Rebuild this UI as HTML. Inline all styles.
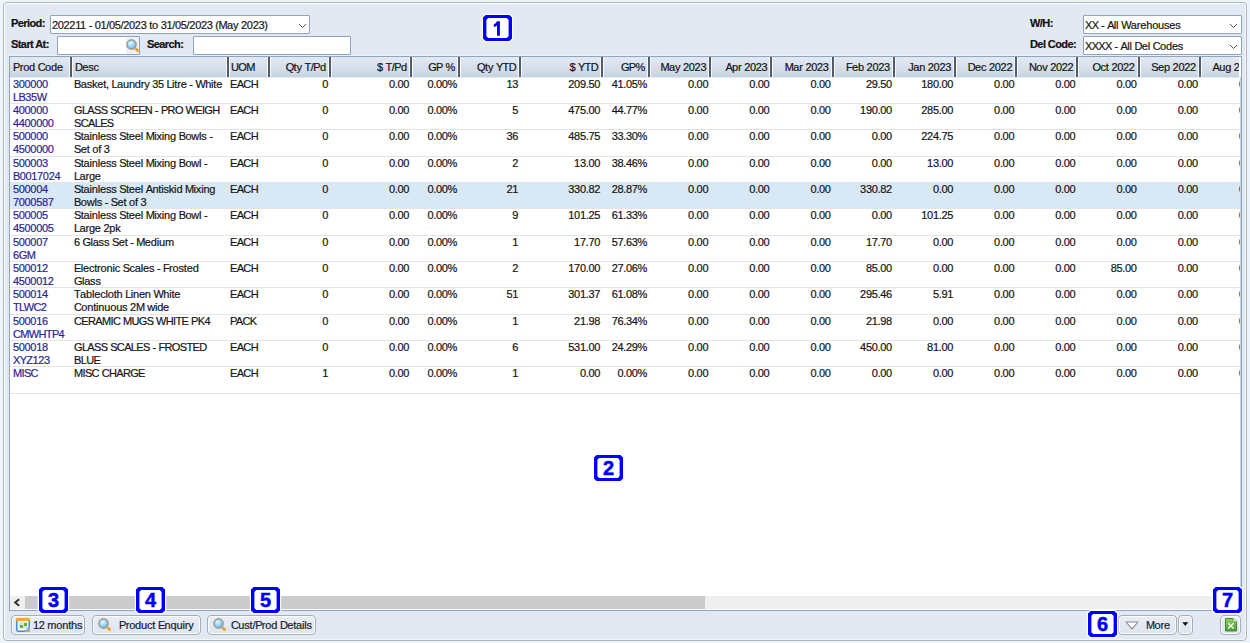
<!DOCTYPE html><html><head><meta charset="utf-8"><style>

*{box-sizing:border-box}
html,body{margin:0;padding:0;width:1250px;height:643px;overflow:hidden;background:#eef4fb;font-family:"Liberation Sans", sans-serif;font-size:11px;letter-spacing:-0.33px;color:#1a1a1a}
.u{letter-spacing:-0.65px} .l{letter-spacing:-0.18px} .lbl .u,.lbl .l{letter-spacing:inherit}
.a{position:absolute;white-space:nowrap;-webkit-text-stroke:0.2px currentColor}
.panel{position:absolute;left:3px;top:2px;width:1244px;height:639px;border:1px solid #b4b5b5;border-radius:4px;background:#e3e9f2;box-shadow:inset 1px 1px 0 #fff,inset -1px -1px 0 #f3f6fa}
.lbl{font-weight:bold;color:#111;letter-spacing:-0.58px}
.inp{position:absolute;background:#fff;border:1px solid #8ea3bd;border-radius:1px}
.hdr{position:absolute;top:57px;height:20px;background:linear-gradient(#e3e9f3,#dae3ee 35%,#cfdae7 80%,#c3d1e1)}
.dv{position:absolute;top:57px;height:20px;width:2px;background:#535c68;box-shadow:-1px 0 0 #f7f9fc,1px 0 0 #f7f9fc}
.ht{position:absolute;top:61px;line-height:13px;color:#141414;-webkit-text-stroke:0.2px currentColor}
.c{position:absolute;line-height:13px;color:#141414;-webkit-text-stroke:0.2px currentColor}
.pc{color:#2a2497}
.rl{position:absolute;height:1px;background:#e4e4e4}
.badge{position:absolute;width:29px;height:26px;background:#fff;border:3px solid #0000ff;border-radius:3px;color:#0000ff;font-weight:bold;font-size:22px;letter-spacing:0;text-align:center;line-height:19px;box-shadow:0 0 0 1px #fff}
.btn{position:absolute;top:615px;height:20px;border:1px solid #a9aeb4;border-radius:4px;background:linear-gradient(#e9eef5,#dde5ef);box-shadow:inset 0 0 0 1px #fafcfe}

</style></head><body>
<div class="panel"></div>
<div class="a lbl" style="left:11px;top:17px;line-height:13px">Period:</div>
<div class="inp" style="left:50px;top:15px;width:260px;height:19px"></div>
<div class="a" style="left:52px;top:19px;line-height:13px;color:#151515">202211 - 01/05/2023 <span class="l">to</span> 31/05/2023 (<span class="u">M</span><span class="l">ay</span> 2023)</div>
<svg class="a" style="left:298px;top:23px" width="9" height="6"><path d="M1 1 L4.5 4.5 L8 1" fill="none" stroke="#5a5a5a" stroke-width="1"/></svg>
<div class="a lbl" style="left:11px;top:38px;line-height:13px">Start At:</div>
<div class="inp" style="left:57px;top:36px;width:83px;height:19px"></div>
<div class="a" style="left:126px;top:37px;width:13px;height:17px;background:#eef0f4"></div>
<svg class="a" style="left:125px;top:38px" width="16" height="16" viewBox="0 0 16 16"><defs><radialGradient id="lg0" cx="0.4" cy="0.35" r="0.75"><stop offset="0" stop-color="#e4f6ff"/><stop offset="0.55" stop-color="#92d2f5"/><stop offset="1" stop-color="#4fa8e3"/></radialGradient></defs><circle cx="6.5" cy="6.5" r="4.6" fill="url(#lg0)" stroke="#a29d99" stroke-width="1.6"/><path d="M11.2 11.2 L12.6 12.6" stroke="#e9a11f" stroke-width="2.8" stroke-linecap="round"/></svg>
<div class="a lbl" style="left:147px;top:38px;line-height:13px">Search:</div>
<div class="inp" style="left:193px;top:36px;width:158px;height:19px"></div>
<div class="a lbl" style="left:1030px;top:17px;line-height:13px">W/H:</div>
<div class="a lbl" style="left:1030px;top:38px;line-height:13px">Del Code:</div>
<div class="inp" style="left:1083px;top:15px;width:159px;height:19px"></div>
<div class="a" style="left:1085px;top:19px;line-height:13px;color:#151515"><span class="u">XX</span> - <span class="u">A</span><span class="l">ll</span> <span class="u">W</span><span class="l">arehouses</span></div>
<svg class="a" style="left:1229px;top:23px" width="9" height="6"><path d="M1 1 L4.5 4.5 L8 1" fill="none" stroke="#5a5a5a" stroke-width="1"/></svg>
<div class="inp" style="left:1083px;top:36px;width:159px;height:19px"></div>
<div class="a" style="left:1085px;top:40px;line-height:13px;color:#151515"><span class="u">XXXX</span> - <span class="u">A</span><span class="l">ll</span> <span class="u">D</span><span class="l">el</span> <span class="u">C</span><span class="l">odes</span></div>
<svg class="a" style="left:1229px;top:44px" width="9" height="6"><path d="M1 1 L4.5 4.5 L8 1" fill="none" stroke="#5a5a5a" stroke-width="1"/></svg>
<div class="a" style="left:10px;top:55px;width:1231px;height:1px;background:#ebf0f8"></div>
<div class="a" style="left:9px;top:56px;width:1233px;height:555px;border:1px solid #8fa4bd;background:#fff;overflow:hidden">
<div class="hdr" style="left:0;top:0;width:1300px"></div>
<div class="a" style="left:0;top:20px;width:1300px;height:1px;background:#e6ecf4"></div>
<div class="ht" style="left:3px;top:4px"><span class="u">P</span><span class="l">rod</span> <span class="u">C</span><span class="l">ode</span></div>
<div class="ht" style="left:65px;top:4px"><span class="u">D</span><span class="l">esc</span></div>
<div class="ht" style="left:221px;top:4px"><span class="u">UOM</span></div>
<div class="ht" style="left:260px;top:4px;width:56px;text-align:right"><span class="u">Q</span><span class="l">ty</span> <span class="u">T</span>/<span class="u">P</span><span class="l">d</span></div>
<div class="ht" style="left:321px;top:4px;width:76px;text-align:right">$ <span class="u">T</span>/<span class="u">P</span><span class="l">d</span></div>
<div class="ht" style="left:402px;top:4px;width:43px;text-align:right"><span class="u">GP</span> %</div>
<div class="ht" style="left:450px;top:4px;width:56px;text-align:right"><span class="u">Q</span><span class="l">ty</span> <span class="u">YTD</span></div>
<div class="ht" style="left:511px;top:4px;width:77px;text-align:right">$ <span class="u">YTD</span></div>
<div class="ht" style="left:593px;top:4px;width:42px;text-align:right"><span class="u">GP</span>%</div>
<div class="ht" style="left:640px;top:4px;width:56.200000000000045px;text-align:right"><span class="u">M</span><span class="l">ay</span> 2023</div>
<div class="ht" style="left:701.2px;top:4px;width:56.19999999999993px;text-align:right"><span class="u">A</span><span class="l">pr</span> 2023</div>
<div class="ht" style="left:762.4px;top:4px;width:56.200000000000045px;text-align:right"><span class="u">M</span><span class="l">ar</span> 2023</div>
<div class="ht" style="left:823.6px;top:4px;width:56.19999999999993px;text-align:right"><span class="u">F</span><span class="l">eb</span> 2023</div>
<div class="ht" style="left:884.8px;top:4px;width:56.200000000000045px;text-align:right"><span class="u">J</span><span class="l">an</span> 2023</div>
<div class="ht" style="left:946.0px;top:4px;width:56.200000000000045px;text-align:right"><span class="u">D</span><span class="l">ec</span> 2022</div>
<div class="ht" style="left:1007.2px;top:4px;width:56.200000000000045px;text-align:right"><span class="u">N</span><span class="l">ov</span> 2022</div>
<div class="ht" style="left:1068.4px;top:4px;width:56.19999999999982px;text-align:right"><span class="u">O</span><span class="l">ct</span> 2022</div>
<div class="ht" style="left:1129.6px;top:4px;width:56.200000000000045px;text-align:right"><span class="u">S</span><span class="l">ep</span> 2022</div>
<div class="ht" style="left:1190.8px;top:4px;width:56.200000000000045px;text-align:right"><span class="u">A</span><span class="l">ug</span> 2022</div>
<div class="dv" style="left:60px;top:0"></div>
<div class="dv" style="left:217px;top:0"></div>
<div class="dv" style="left:258px;top:0"></div>
<div class="dv" style="left:319px;top:0"></div>
<div class="dv" style="left:400px;top:0"></div>
<div class="dv" style="left:448px;top:0"></div>
<div class="dv" style="left:509px;top:0"></div>
<div class="dv" style="left:591px;top:0"></div>
<div class="dv" style="left:638px;top:0"></div>
<div class="dv" style="left:699.2px;top:0"></div>
<div class="dv" style="left:760.4px;top:0"></div>
<div class="dv" style="left:821.6px;top:0"></div>
<div class="dv" style="left:882.8px;top:0"></div>
<div class="dv" style="left:944.0px;top:0"></div>
<div class="dv" style="left:1005.2px;top:0"></div>
<div class="dv" style="left:1066.4px;top:0"></div>
<div class="dv" style="left:1127.6px;top:0"></div>
<div class="dv" style="left:1188.8px;top:0"></div>
<div class="dv" style="left:1250.0px;top:0"></div>
<div class="rl" style="left:0;top:46px;width:1300px"></div>
<div class="c pc" style="left:3px;top:21.00px">300000<br><span class="u">LB</span>35<span class="u">W</span></div>
<div class="c" style="left:64px;top:21.00px"><span class="u">B</span><span class="l">asket</span>, <span class="u">L</span><span class="l">aundry</span> 35 <span class="u">L</span><span class="l">itre</span> - <span class="u">W</span><span class="l">hite</span><br></div>
<div class="c" style="left:220px;top:21.00px"><span class="u">EACH</span></div>
<div class="c" style="left:260px;top:21.00px;width:58px;text-align:right">0</div>
<div class="c" style="left:321px;top:21.00px;width:78px;text-align:right">0.00</div>
<div class="c" style="left:402px;top:21.00px;width:45px;text-align:right">0.00%</div>
<div class="c" style="left:450px;top:21.00px;width:58px;text-align:right">13</div>
<div class="c" style="left:511px;top:21.00px;width:79px;text-align:right">209.50</div>
<div class="c" style="left:593px;top:21.00px;width:44px;text-align:right">41.05%</div>
<div class="c" style="left:640px;top:21.00px;width:58.200000000000045px;text-align:right">0.00</div>
<div class="c" style="left:701.2px;top:21.00px;width:58.19999999999993px;text-align:right">0.00</div>
<div class="c" style="left:762.4px;top:21.00px;width:58.200000000000045px;text-align:right">0.00</div>
<div class="c" style="left:823.6px;top:21.00px;width:58.19999999999993px;text-align:right">29.50</div>
<div class="c" style="left:884.8px;top:21.00px;width:58.200000000000045px;text-align:right">180.00</div>
<div class="c" style="left:946.0px;top:21.00px;width:58.200000000000045px;text-align:right">0.00</div>
<div class="c" style="left:1007.2px;top:21.00px;width:58.200000000000045px;text-align:right">0.00</div>
<div class="c" style="left:1068.4px;top:21.00px;width:58.19999999999982px;text-align:right">0.00</div>
<div class="c" style="left:1129.6px;top:21.00px;width:58.200000000000045px;text-align:right">0.00</div>
<div class="c" style="left:1190.8px;top:21.00px;width:58.200000000000045px;text-align:right">0.00</div>
<div class="rl" style="left:0;top:72px;width:1300px"></div>
<div class="c pc" style="left:3px;top:47.00px">400000<br>4400000</div>
<div class="c" style="left:64px;top:47.00px"><span class="u">GLASS</span> <span class="u">SCREEN</span> - <span class="u">PRO</span> <span class="u">WEIGH</span><br><span class="u">SCALES</span></div>
<div class="c" style="left:220px;top:47.00px"><span class="u">EACH</span></div>
<div class="c" style="left:260px;top:47.00px;width:58px;text-align:right">0</div>
<div class="c" style="left:321px;top:47.00px;width:78px;text-align:right">0.00</div>
<div class="c" style="left:402px;top:47.00px;width:45px;text-align:right">0.00%</div>
<div class="c" style="left:450px;top:47.00px;width:58px;text-align:right">5</div>
<div class="c" style="left:511px;top:47.00px;width:79px;text-align:right">475.00</div>
<div class="c" style="left:593px;top:47.00px;width:44px;text-align:right">44.77%</div>
<div class="c" style="left:640px;top:47.00px;width:58.200000000000045px;text-align:right">0.00</div>
<div class="c" style="left:701.2px;top:47.00px;width:58.19999999999993px;text-align:right">0.00</div>
<div class="c" style="left:762.4px;top:47.00px;width:58.200000000000045px;text-align:right">0.00</div>
<div class="c" style="left:823.6px;top:47.00px;width:58.19999999999993px;text-align:right">190.00</div>
<div class="c" style="left:884.8px;top:47.00px;width:58.200000000000045px;text-align:right">285.00</div>
<div class="c" style="left:946.0px;top:47.00px;width:58.200000000000045px;text-align:right">0.00</div>
<div class="c" style="left:1007.2px;top:47.00px;width:58.200000000000045px;text-align:right">0.00</div>
<div class="c" style="left:1068.4px;top:47.00px;width:58.19999999999982px;text-align:right">0.00</div>
<div class="c" style="left:1129.6px;top:47.00px;width:58.200000000000045px;text-align:right">0.00</div>
<div class="c" style="left:1190.8px;top:47.00px;width:58.200000000000045px;text-align:right">0.00</div>
<div class="rl" style="left:0;top:99px;width:1300px"></div>
<div class="c pc" style="left:3px;top:73.00px">500000<br>4500000</div>
<div class="c" style="left:64px;top:73.00px"><span class="u">S</span><span class="l">tainless</span> <span class="u">S</span><span class="l">teel</span> <span class="u">M</span><span class="l">ixing</span> <span class="u">B</span><span class="l">owls</span> -<br><span class="u">S</span><span class="l">et</span> <span class="l">of</span> 3</div>
<div class="c" style="left:220px;top:73.00px"><span class="u">EACH</span></div>
<div class="c" style="left:260px;top:73.00px;width:58px;text-align:right">0</div>
<div class="c" style="left:321px;top:73.00px;width:78px;text-align:right">0.00</div>
<div class="c" style="left:402px;top:73.00px;width:45px;text-align:right">0.00%</div>
<div class="c" style="left:450px;top:73.00px;width:58px;text-align:right">36</div>
<div class="c" style="left:511px;top:73.00px;width:79px;text-align:right">485.75</div>
<div class="c" style="left:593px;top:73.00px;width:44px;text-align:right">33.30%</div>
<div class="c" style="left:640px;top:73.00px;width:58.200000000000045px;text-align:right">0.00</div>
<div class="c" style="left:701.2px;top:73.00px;width:58.19999999999993px;text-align:right">0.00</div>
<div class="c" style="left:762.4px;top:73.00px;width:58.200000000000045px;text-align:right">0.00</div>
<div class="c" style="left:823.6px;top:73.00px;width:58.19999999999993px;text-align:right">0.00</div>
<div class="c" style="left:884.8px;top:73.00px;width:58.200000000000045px;text-align:right">224.75</div>
<div class="c" style="left:946.0px;top:73.00px;width:58.200000000000045px;text-align:right">0.00</div>
<div class="c" style="left:1007.2px;top:73.00px;width:58.200000000000045px;text-align:right">0.00</div>
<div class="c" style="left:1068.4px;top:73.00px;width:58.19999999999982px;text-align:right">0.00</div>
<div class="c" style="left:1129.6px;top:73.00px;width:58.200000000000045px;text-align:right">0.00</div>
<div class="c" style="left:1190.8px;top:73.00px;width:58.200000000000045px;text-align:right">0.00</div>
<div class="rl" style="left:0;top:125px;width:1300px"></div>
<div class="c pc" style="left:3px;top:100.00px">500003<br><span class="u">B</span>0017024</div>
<div class="c" style="left:64px;top:100.00px"><span class="u">S</span><span class="l">tainless</span> <span class="u">S</span><span class="l">teel</span> <span class="u">M</span><span class="l">ixing</span> <span class="u">B</span><span class="l">owl</span> -<br><span class="u">L</span><span class="l">arge</span></div>
<div class="c" style="left:220px;top:100.00px"><span class="u">EACH</span></div>
<div class="c" style="left:260px;top:100.00px;width:58px;text-align:right">0</div>
<div class="c" style="left:321px;top:100.00px;width:78px;text-align:right">0.00</div>
<div class="c" style="left:402px;top:100.00px;width:45px;text-align:right">0.00%</div>
<div class="c" style="left:450px;top:100.00px;width:58px;text-align:right">2</div>
<div class="c" style="left:511px;top:100.00px;width:79px;text-align:right">13.00</div>
<div class="c" style="left:593px;top:100.00px;width:44px;text-align:right">38.46%</div>
<div class="c" style="left:640px;top:100.00px;width:58.200000000000045px;text-align:right">0.00</div>
<div class="c" style="left:701.2px;top:100.00px;width:58.19999999999993px;text-align:right">0.00</div>
<div class="c" style="left:762.4px;top:100.00px;width:58.200000000000045px;text-align:right">0.00</div>
<div class="c" style="left:823.6px;top:100.00px;width:58.19999999999993px;text-align:right">0.00</div>
<div class="c" style="left:884.8px;top:100.00px;width:58.200000000000045px;text-align:right">13.00</div>
<div class="c" style="left:946.0px;top:100.00px;width:58.200000000000045px;text-align:right">0.00</div>
<div class="c" style="left:1007.2px;top:100.00px;width:58.200000000000045px;text-align:right">0.00</div>
<div class="c" style="left:1068.4px;top:100.00px;width:58.19999999999982px;text-align:right">0.00</div>
<div class="c" style="left:1129.6px;top:100.00px;width:58.200000000000045px;text-align:right">0.00</div>
<div class="c" style="left:1190.8px;top:100.00px;width:58.200000000000045px;text-align:right">0.00</div>
<div class="a" style="left:0;top:126px;width:1300px;height:25px;background:#d9e8f5"></div>
<div class="rl" style="left:0;top:151px;width:1300px"></div>
<div class="c pc" style="left:3px;top:126.00px">500004<br>7000587</div>
<div class="c" style="left:64px;top:126.00px"><span class="u">S</span><span class="l">tainless</span> <span class="u">S</span><span class="l">teel</span> <span class="u">A</span><span class="l">ntiskid</span> <span class="u">M</span><span class="l">ixing</span><br><span class="u">B</span><span class="l">owls</span> - <span class="u">S</span><span class="l">et</span> <span class="l">of</span> 3</div>
<div class="c" style="left:220px;top:126.00px"><span class="u">EACH</span></div>
<div class="c" style="left:260px;top:126.00px;width:58px;text-align:right">0</div>
<div class="c" style="left:321px;top:126.00px;width:78px;text-align:right">0.00</div>
<div class="c" style="left:402px;top:126.00px;width:45px;text-align:right">0.00%</div>
<div class="c" style="left:450px;top:126.00px;width:58px;text-align:right">21</div>
<div class="c" style="left:511px;top:126.00px;width:79px;text-align:right">330.82</div>
<div class="c" style="left:593px;top:126.00px;width:44px;text-align:right">28.87%</div>
<div class="c" style="left:640px;top:126.00px;width:58.200000000000045px;text-align:right">0.00</div>
<div class="c" style="left:701.2px;top:126.00px;width:58.19999999999993px;text-align:right">0.00</div>
<div class="c" style="left:762.4px;top:126.00px;width:58.200000000000045px;text-align:right">0.00</div>
<div class="c" style="left:823.6px;top:126.00px;width:58.19999999999993px;text-align:right">330.82</div>
<div class="c" style="left:884.8px;top:126.00px;width:58.200000000000045px;text-align:right">0.00</div>
<div class="c" style="left:946.0px;top:126.00px;width:58.200000000000045px;text-align:right">0.00</div>
<div class="c" style="left:1007.2px;top:126.00px;width:58.200000000000045px;text-align:right">0.00</div>
<div class="c" style="left:1068.4px;top:126.00px;width:58.19999999999982px;text-align:right">0.00</div>
<div class="c" style="left:1129.6px;top:126.00px;width:58.200000000000045px;text-align:right">0.00</div>
<div class="c" style="left:1190.8px;top:126.00px;width:58.200000000000045px;text-align:right">0.00</div>
<div class="rl" style="left:0;top:178px;width:1300px"></div>
<div class="c pc" style="left:3px;top:152.00px">500005<br>4500005</div>
<div class="c" style="left:64px;top:152.00px"><span class="u">S</span><span class="l">tainless</span> <span class="u">S</span><span class="l">teel</span> <span class="u">M</span><span class="l">ixing</span> <span class="u">B</span><span class="l">owl</span> -<br><span class="u">L</span><span class="l">arge</span> 2<span class="l">pk</span></div>
<div class="c" style="left:220px;top:152.00px"><span class="u">EACH</span></div>
<div class="c" style="left:260px;top:152.00px;width:58px;text-align:right">0</div>
<div class="c" style="left:321px;top:152.00px;width:78px;text-align:right">0.00</div>
<div class="c" style="left:402px;top:152.00px;width:45px;text-align:right">0.00%</div>
<div class="c" style="left:450px;top:152.00px;width:58px;text-align:right">9</div>
<div class="c" style="left:511px;top:152.00px;width:79px;text-align:right">101.25</div>
<div class="c" style="left:593px;top:152.00px;width:44px;text-align:right">61.33%</div>
<div class="c" style="left:640px;top:152.00px;width:58.200000000000045px;text-align:right">0.00</div>
<div class="c" style="left:701.2px;top:152.00px;width:58.19999999999993px;text-align:right">0.00</div>
<div class="c" style="left:762.4px;top:152.00px;width:58.200000000000045px;text-align:right">0.00</div>
<div class="c" style="left:823.6px;top:152.00px;width:58.19999999999993px;text-align:right">0.00</div>
<div class="c" style="left:884.8px;top:152.00px;width:58.200000000000045px;text-align:right">101.25</div>
<div class="c" style="left:946.0px;top:152.00px;width:58.200000000000045px;text-align:right">0.00</div>
<div class="c" style="left:1007.2px;top:152.00px;width:58.200000000000045px;text-align:right">0.00</div>
<div class="c" style="left:1068.4px;top:152.00px;width:58.19999999999982px;text-align:right">0.00</div>
<div class="c" style="left:1129.6px;top:152.00px;width:58.200000000000045px;text-align:right">0.00</div>
<div class="c" style="left:1190.8px;top:152.00px;width:58.200000000000045px;text-align:right">0.00</div>
<div class="rl" style="left:0;top:204px;width:1300px"></div>
<div class="c pc" style="left:3px;top:179.00px">500007<br>6<span class="u">GM</span></div>
<div class="c" style="left:64px;top:179.00px">6 <span class="u">G</span><span class="l">lass</span> <span class="u">S</span><span class="l">et</span> - <span class="u">M</span><span class="l">edium</span><br></div>
<div class="c" style="left:220px;top:179.00px"><span class="u">EACH</span></div>
<div class="c" style="left:260px;top:179.00px;width:58px;text-align:right">0</div>
<div class="c" style="left:321px;top:179.00px;width:78px;text-align:right">0.00</div>
<div class="c" style="left:402px;top:179.00px;width:45px;text-align:right">0.00%</div>
<div class="c" style="left:450px;top:179.00px;width:58px;text-align:right">1</div>
<div class="c" style="left:511px;top:179.00px;width:79px;text-align:right">17.70</div>
<div class="c" style="left:593px;top:179.00px;width:44px;text-align:right">57.63%</div>
<div class="c" style="left:640px;top:179.00px;width:58.200000000000045px;text-align:right">0.00</div>
<div class="c" style="left:701.2px;top:179.00px;width:58.19999999999993px;text-align:right">0.00</div>
<div class="c" style="left:762.4px;top:179.00px;width:58.200000000000045px;text-align:right">0.00</div>
<div class="c" style="left:823.6px;top:179.00px;width:58.19999999999993px;text-align:right">17.70</div>
<div class="c" style="left:884.8px;top:179.00px;width:58.200000000000045px;text-align:right">0.00</div>
<div class="c" style="left:946.0px;top:179.00px;width:58.200000000000045px;text-align:right">0.00</div>
<div class="c" style="left:1007.2px;top:179.00px;width:58.200000000000045px;text-align:right">0.00</div>
<div class="c" style="left:1068.4px;top:179.00px;width:58.19999999999982px;text-align:right">0.00</div>
<div class="c" style="left:1129.6px;top:179.00px;width:58.200000000000045px;text-align:right">0.00</div>
<div class="c" style="left:1190.8px;top:179.00px;width:58.200000000000045px;text-align:right">0.00</div>
<div class="rl" style="left:0;top:230px;width:1300px"></div>
<div class="c pc" style="left:3px;top:205.00px">500012<br>4500012</div>
<div class="c" style="left:64px;top:205.00px"><span class="u">E</span><span class="l">lectronic</span> <span class="u">S</span><span class="l">cales</span> - <span class="u">F</span><span class="l">rosted</span><br><span class="u">G</span><span class="l">lass</span></div>
<div class="c" style="left:220px;top:205.00px"><span class="u">EACH</span></div>
<div class="c" style="left:260px;top:205.00px;width:58px;text-align:right">0</div>
<div class="c" style="left:321px;top:205.00px;width:78px;text-align:right">0.00</div>
<div class="c" style="left:402px;top:205.00px;width:45px;text-align:right">0.00%</div>
<div class="c" style="left:450px;top:205.00px;width:58px;text-align:right">2</div>
<div class="c" style="left:511px;top:205.00px;width:79px;text-align:right">170.00</div>
<div class="c" style="left:593px;top:205.00px;width:44px;text-align:right">27.06%</div>
<div class="c" style="left:640px;top:205.00px;width:58.200000000000045px;text-align:right">0.00</div>
<div class="c" style="left:701.2px;top:205.00px;width:58.19999999999993px;text-align:right">0.00</div>
<div class="c" style="left:762.4px;top:205.00px;width:58.200000000000045px;text-align:right">0.00</div>
<div class="c" style="left:823.6px;top:205.00px;width:58.19999999999993px;text-align:right">85.00</div>
<div class="c" style="left:884.8px;top:205.00px;width:58.200000000000045px;text-align:right">0.00</div>
<div class="c" style="left:946.0px;top:205.00px;width:58.200000000000045px;text-align:right">0.00</div>
<div class="c" style="left:1007.2px;top:205.00px;width:58.200000000000045px;text-align:right">0.00</div>
<div class="c" style="left:1068.4px;top:205.00px;width:58.19999999999982px;text-align:right">85.00</div>
<div class="c" style="left:1129.6px;top:205.00px;width:58.200000000000045px;text-align:right">0.00</div>
<div class="c" style="left:1190.8px;top:205.00px;width:58.200000000000045px;text-align:right">0.00</div>
<div class="rl" style="left:0;top:257px;width:1300px"></div>
<div class="c pc" style="left:3px;top:231.00px">500014<br><span class="u">TLWC</span>2</div>
<div class="c" style="left:64px;top:231.00px"><span class="u">T</span><span class="l">ablecloth</span> <span class="u">L</span><span class="l">inen</span> <span class="u">W</span><span class="l">hite</span><br><span class="u">C</span><span class="l">ontinuous</span> 2<span class="u">M</span> <span class="l">wide</span></div>
<div class="c" style="left:220px;top:231.00px"><span class="u">EACH</span></div>
<div class="c" style="left:260px;top:231.00px;width:58px;text-align:right">0</div>
<div class="c" style="left:321px;top:231.00px;width:78px;text-align:right">0.00</div>
<div class="c" style="left:402px;top:231.00px;width:45px;text-align:right">0.00%</div>
<div class="c" style="left:450px;top:231.00px;width:58px;text-align:right">51</div>
<div class="c" style="left:511px;top:231.00px;width:79px;text-align:right">301.37</div>
<div class="c" style="left:593px;top:231.00px;width:44px;text-align:right">61.08%</div>
<div class="c" style="left:640px;top:231.00px;width:58.200000000000045px;text-align:right">0.00</div>
<div class="c" style="left:701.2px;top:231.00px;width:58.19999999999993px;text-align:right">0.00</div>
<div class="c" style="left:762.4px;top:231.00px;width:58.200000000000045px;text-align:right">0.00</div>
<div class="c" style="left:823.6px;top:231.00px;width:58.19999999999993px;text-align:right">295.46</div>
<div class="c" style="left:884.8px;top:231.00px;width:58.200000000000045px;text-align:right">5.91</div>
<div class="c" style="left:946.0px;top:231.00px;width:58.200000000000045px;text-align:right">0.00</div>
<div class="c" style="left:1007.2px;top:231.00px;width:58.200000000000045px;text-align:right">0.00</div>
<div class="c" style="left:1068.4px;top:231.00px;width:58.19999999999982px;text-align:right">0.00</div>
<div class="c" style="left:1129.6px;top:231.00px;width:58.200000000000045px;text-align:right">0.00</div>
<div class="c" style="left:1190.8px;top:231.00px;width:58.200000000000045px;text-align:right">0.00</div>
<div class="rl" style="left:0;top:283px;width:1300px"></div>
<div class="c pc" style="left:3px;top:258.00px">500016<br><span class="u">CMWHTP</span>4</div>
<div class="c" style="left:64px;top:258.00px"><span class="u">CERAMIC</span> <span class="u">MUGS</span> <span class="u">WHITE</span> <span class="u">PK</span>4<br></div>
<div class="c" style="left:220px;top:258.00px"><span class="u">PACK</span></div>
<div class="c" style="left:260px;top:258.00px;width:58px;text-align:right">0</div>
<div class="c" style="left:321px;top:258.00px;width:78px;text-align:right">0.00</div>
<div class="c" style="left:402px;top:258.00px;width:45px;text-align:right">0.00%</div>
<div class="c" style="left:450px;top:258.00px;width:58px;text-align:right">1</div>
<div class="c" style="left:511px;top:258.00px;width:79px;text-align:right">21.98</div>
<div class="c" style="left:593px;top:258.00px;width:44px;text-align:right">76.34%</div>
<div class="c" style="left:640px;top:258.00px;width:58.200000000000045px;text-align:right">0.00</div>
<div class="c" style="left:701.2px;top:258.00px;width:58.19999999999993px;text-align:right">0.00</div>
<div class="c" style="left:762.4px;top:258.00px;width:58.200000000000045px;text-align:right">0.00</div>
<div class="c" style="left:823.6px;top:258.00px;width:58.19999999999993px;text-align:right">21.98</div>
<div class="c" style="left:884.8px;top:258.00px;width:58.200000000000045px;text-align:right">0.00</div>
<div class="c" style="left:946.0px;top:258.00px;width:58.200000000000045px;text-align:right">0.00</div>
<div class="c" style="left:1007.2px;top:258.00px;width:58.200000000000045px;text-align:right">0.00</div>
<div class="c" style="left:1068.4px;top:258.00px;width:58.19999999999982px;text-align:right">0.00</div>
<div class="c" style="left:1129.6px;top:258.00px;width:58.200000000000045px;text-align:right">0.00</div>
<div class="c" style="left:1190.8px;top:258.00px;width:58.200000000000045px;text-align:right">0.00</div>
<div class="rl" style="left:0;top:309px;width:1300px"></div>
<div class="c pc" style="left:3px;top:284.00px">500018<br><span class="u">XYZ</span>123</div>
<div class="c" style="left:64px;top:284.00px"><span class="u">GLASS</span> <span class="u">SCALES</span> - <span class="u">FROSTED</span><br><span class="u">BLUE</span></div>
<div class="c" style="left:220px;top:284.00px"><span class="u">EACH</span></div>
<div class="c" style="left:260px;top:284.00px;width:58px;text-align:right">0</div>
<div class="c" style="left:321px;top:284.00px;width:78px;text-align:right">0.00</div>
<div class="c" style="left:402px;top:284.00px;width:45px;text-align:right">0.00%</div>
<div class="c" style="left:450px;top:284.00px;width:58px;text-align:right">6</div>
<div class="c" style="left:511px;top:284.00px;width:79px;text-align:right">531.00</div>
<div class="c" style="left:593px;top:284.00px;width:44px;text-align:right">24.29%</div>
<div class="c" style="left:640px;top:284.00px;width:58.200000000000045px;text-align:right">0.00</div>
<div class="c" style="left:701.2px;top:284.00px;width:58.19999999999993px;text-align:right">0.00</div>
<div class="c" style="left:762.4px;top:284.00px;width:58.200000000000045px;text-align:right">0.00</div>
<div class="c" style="left:823.6px;top:284.00px;width:58.19999999999993px;text-align:right">450.00</div>
<div class="c" style="left:884.8px;top:284.00px;width:58.200000000000045px;text-align:right">81.00</div>
<div class="c" style="left:946.0px;top:284.00px;width:58.200000000000045px;text-align:right">0.00</div>
<div class="c" style="left:1007.2px;top:284.00px;width:58.200000000000045px;text-align:right">0.00</div>
<div class="c" style="left:1068.4px;top:284.00px;width:58.19999999999982px;text-align:right">0.00</div>
<div class="c" style="left:1129.6px;top:284.00px;width:58.200000000000045px;text-align:right">0.00</div>
<div class="c" style="left:1190.8px;top:284.00px;width:58.200000000000045px;text-align:right">0.00</div>
<div class="rl" style="left:0;top:336px;width:1300px"></div>
<div class="c pc" style="left:3px;top:310.00px"><span class="u">MISC</span><br></div>
<div class="c" style="left:64px;top:310.00px"><span class="u">MISC</span> <span class="u">CHARGE</span><br></div>
<div class="c" style="left:220px;top:310.00px"><span class="u">EACH</span></div>
<div class="c" style="left:260px;top:310.00px;width:58px;text-align:right">1</div>
<div class="c" style="left:321px;top:310.00px;width:78px;text-align:right">0.00</div>
<div class="c" style="left:402px;top:310.00px;width:45px;text-align:right">0.00%</div>
<div class="c" style="left:450px;top:310.00px;width:58px;text-align:right">1</div>
<div class="c" style="left:511px;top:310.00px;width:79px;text-align:right">0.00</div>
<div class="c" style="left:593px;top:310.00px;width:44px;text-align:right">0.00%</div>
<div class="c" style="left:640px;top:310.00px;width:58.200000000000045px;text-align:right">0.00</div>
<div class="c" style="left:701.2px;top:310.00px;width:58.19999999999993px;text-align:right">0.00</div>
<div class="c" style="left:762.4px;top:310.00px;width:58.200000000000045px;text-align:right">0.00</div>
<div class="c" style="left:823.6px;top:310.00px;width:58.19999999999993px;text-align:right">0.00</div>
<div class="c" style="left:884.8px;top:310.00px;width:58.200000000000045px;text-align:right">0.00</div>
<div class="c" style="left:946.0px;top:310.00px;width:58.200000000000045px;text-align:right">0.00</div>
<div class="c" style="left:1007.2px;top:310.00px;width:58.200000000000045px;text-align:right">0.00</div>
<div class="c" style="left:1068.4px;top:310.00px;width:58.19999999999982px;text-align:right">0.00</div>
<div class="c" style="left:1129.6px;top:310.00px;width:58.200000000000045px;text-align:right">0.00</div>
<div class="c" style="left:1190.8px;top:310.00px;width:58.200000000000045px;text-align:right">0.00</div>
<div class="a" style="left:1229px;top:0;width:4px;height:20px;background:#fff"></div>
<div class="rl" style="left:0;top:361.42px;width:0"></div>
<div class="a" style="left:0;top:539px;width:1300px;height:13px;background:#efefef"></div>
<div class="a" style="left:15px;top:539px;width:680px;height:13px;background:#cbcbcb"></div>
<svg class="a" style="left:3px;top:541px" width="8" height="9"><path d="M6.2 1.2 L2.2 4.5 L6.2 7.8" fill="none" stroke="#333" stroke-width="2"/></svg>
<div class="a" style="left:1230px;top:20px;width:1px;height:533px;background:#c3d2e2"></div>
</div>
<div class="btn" style="left:11px;width:74px"></div>
<svg class="a" style="left:16px;top:618px" width="14" height="14" viewBox="0 0 14 14"><rect x="0.75" y="0.75" width="12.5" height="12.5" rx="1.5" fill="#fff" stroke="#3b8fd0" stroke-width="1.5"/><rect x="0" y="0" width="14" height="3" rx="1.2" fill="#f5a53a"/><rect x="2.5" y="4" width="9" height="6.5" fill="#e2e0ea"/><rect x="4" y="7" width="3" height="3" fill="#5cb82a"/><rect x="8" y="5" width="3" height="3" fill="#5cb82a"/><path d="M8.5 14 L14 8.5 L14 14Z" fill="#aaaaaa"/><path d="M8.5 13.2 L13.2 8.5" stroke="#6aa6da" stroke-width="1"/></svg>
<div class="a" style="left:33px;top:619px;line-height:13px;color:#1a1a2a">12 <span class="l">months</span></div>
<div class="btn" style="left:92px;width:109px"></div>
<svg class="a" style="left:97px;top:617px" width="16" height="16" viewBox="0 0 16 16"><defs><radialGradient id="lg1" cx="0.4" cy="0.35" r="0.75"><stop offset="0" stop-color="#e4f6ff"/><stop offset="0.55" stop-color="#92d2f5"/><stop offset="1" stop-color="#4fa8e3"/></radialGradient></defs><circle cx="6.5" cy="6.5" r="4.6" fill="url(#lg1)" stroke="#a29d99" stroke-width="1.6"/><path d="M11.2 11.2 L12.6 12.6" stroke="#e9a11f" stroke-width="2.8" stroke-linecap="round"/></svg>
<div class="a" style="left:119px;top:619px;line-height:13px;color:#1a1a2a"><span class="u">P</span><span class="l">roduct</span> <span class="u">E</span><span class="l">nquiry</span></div>
<div class="btn" style="left:207px;width:109px"></div>
<svg class="a" style="left:212px;top:617px" width="16" height="16" viewBox="0 0 16 16"><defs><radialGradient id="lg2" cx="0.4" cy="0.35" r="0.75"><stop offset="0" stop-color="#e4f6ff"/><stop offset="0.55" stop-color="#92d2f5"/><stop offset="1" stop-color="#4fa8e3"/></radialGradient></defs><circle cx="6.5" cy="6.5" r="4.6" fill="url(#lg2)" stroke="#a29d99" stroke-width="1.6"/><path d="M11.2 11.2 L12.6 12.6" stroke="#e9a11f" stroke-width="2.8" stroke-linecap="round"/></svg>
<div class="a" style="left:231px;top:619px;line-height:13px;color:#1a1a2a"><span class="u">C</span><span class="l">ust</span>/<span class="u">P</span><span class="l">rod</span> <span class="u">D</span><span class="l">etails</span></div>
<div class="btn" style="left:1118px;width:59px"></div>
<svg class="a" style="left:1125px;top:621px" width="14" height="9"><path d="M1 1 L13 1 L7 7.8Z" fill="#fbfcfd" stroke="#8a8a8a" stroke-width="1.1" stroke-linejoin="round"/></svg>
<div class="a" style="left:1146px;top:619px;line-height:13px;color:#1a1a2a"><span class="u">M</span><span class="l">ore</span></div>
<div class="btn" style="left:1178px;width:15px"></div>
<svg class="a" style="left:1182px;top:622px" width="7" height="5"><path d="M0.3 0.3 L6.3 0.3 L3.3 4Z" fill="#111"/></svg>
<div class="btn" style="left:1220px;width:21px"></div>
<svg class="a" style="left:1225px;top:618px" width="12" height="14" viewBox="0 0 12 14"><defs><linearGradient id="xg" x1="0" y1="0" x2="0" y2="1"><stop offset="0" stop-color="#8fd06a"/><stop offset="1" stop-color="#4e9e32"/></linearGradient></defs><path d="M0.5 0.5 L8 0.5 L11.5 4 L11.5 13 L0.5 13Z" fill="url(#xg)" stroke="#3f8a26"/><path d="M8 0.5 L8 4 L11.5 4" fill="#e6f3dc" stroke="#6aa850"/><path d="M3.2 5.2 L8.6 10.6 M8.6 5.2 L3.2 10.6" stroke="#f4fff0" stroke-width="1.4"/></svg>
<svg class="a" style="-webkit-text-stroke:0;left:481px;top:13px" width="33" height="30" viewBox="-2 -2 33 30"><path d="M2.6 0 H26.4 L29 2.6 V23.4 L26.4 26 H2.6 L0 23.4 V2.6Z" fill="#fff" stroke="#fff" stroke-width="2.6" stroke-linejoin="round" opacity="0.95"/><path d="M2.6 0 H26.4 L29 2.6 V23.4 L26.4 26 H2.6 L0 23.4 V2.6Z" fill="#0000ff"/><path d="M5.2 3.0 H23.8 L25.6 4.8 V21.2 L23.8 23.0 H5.2 L3.4 21.2 V4.8Z" fill="#fff"/><path d="M14.0 6.2 L16.9 6.2 L16.9 20.8 L14.0 20.8 L14.0 10.4 Q12.6 11.4 10.8 11.9 L10.8 9.6 Q13.0 8.7 14.0 6.2Z" fill="#0000ff"/></svg>
<svg class="a" style="-webkit-text-stroke:0;left:592px;top:453px" width="33" height="30" viewBox="-2 -2 33 30"><path d="M2.6 0 H26.4 L29 2.6 V23.4 L26.4 26 H2.6 L0 23.4 V2.6Z" fill="#fff" stroke="#fff" stroke-width="2.6" stroke-linejoin="round" opacity="0.95"/><path d="M2.6 0 H26.4 L29 2.6 V23.4 L26.4 26 H2.6 L0 23.4 V2.6Z" fill="#0000ff"/><path d="M5.2 3.0 H23.8 L25.6 4.8 V21.2 L23.8 23.0 H5.2 L3.4 21.2 V4.8Z" fill="#fff"/><text x="14.5" y="20.2" text-anchor="middle" font-family="Liberation Sans" font-weight="bold" font-size="20" fill="#0000ff" stroke="#0000ff" stroke-width="0.5">2</text></svg>
<svg class="a" style="-webkit-text-stroke:0;left:37px;top:585px" width="33" height="30" viewBox="-2 -2 33 30"><path d="M2.6 0 H26.4 L29 2.6 V23.4 L26.4 26 H2.6 L0 23.4 V2.6Z" fill="#fff" stroke="#fff" stroke-width="2.6" stroke-linejoin="round" opacity="0.95"/><path d="M2.6 0 H26.4 L29 2.6 V23.4 L26.4 26 H2.6 L0 23.4 V2.6Z" fill="#0000ff"/><path d="M5.2 3.0 H23.8 L25.6 4.8 V21.2 L23.8 23.0 H5.2 L3.4 21.2 V4.8Z" fill="#fff"/><text x="14.5" y="20.2" text-anchor="middle" font-family="Liberation Sans" font-weight="bold" font-size="20" fill="#0000ff" stroke="#0000ff" stroke-width="0.5">3</text></svg>
<svg class="a" style="-webkit-text-stroke:0;left:134px;top:585px" width="33" height="30" viewBox="-2 -2 33 30"><path d="M2.6 0 H26.4 L29 2.6 V23.4 L26.4 26 H2.6 L0 23.4 V2.6Z" fill="#fff" stroke="#fff" stroke-width="2.6" stroke-linejoin="round" opacity="0.95"/><path d="M2.6 0 H26.4 L29 2.6 V23.4 L26.4 26 H2.6 L0 23.4 V2.6Z" fill="#0000ff"/><path d="M5.2 3.0 H23.8 L25.6 4.8 V21.2 L23.8 23.0 H5.2 L3.4 21.2 V4.8Z" fill="#fff"/><text x="14.5" y="20.2" text-anchor="middle" font-family="Liberation Sans" font-weight="bold" font-size="20" fill="#0000ff" stroke="#0000ff" stroke-width="0.5">4</text></svg>
<svg class="a" style="-webkit-text-stroke:0;left:249px;top:585px" width="33" height="30" viewBox="-2 -2 33 30"><path d="M2.6 0 H26.4 L29 2.6 V23.4 L26.4 26 H2.6 L0 23.4 V2.6Z" fill="#fff" stroke="#fff" stroke-width="2.6" stroke-linejoin="round" opacity="0.95"/><path d="M2.6 0 H26.4 L29 2.6 V23.4 L26.4 26 H2.6 L0 23.4 V2.6Z" fill="#0000ff"/><path d="M5.2 3.0 H23.8 L25.6 4.8 V21.2 L23.8 23.0 H5.2 L3.4 21.2 V4.8Z" fill="#fff"/><text x="14.5" y="20.2" text-anchor="middle" font-family="Liberation Sans" font-weight="bold" font-size="20" fill="#0000ff" stroke="#0000ff" stroke-width="0.5">5</text></svg>
<svg class="a" style="-webkit-text-stroke:0;left:1086px;top:609px" width="33" height="30" viewBox="-2 -2 33 30"><path d="M2.6 0 H26.4 L29 2.6 V23.4 L26.4 26 H2.6 L0 23.4 V2.6Z" fill="#fff" stroke="#fff" stroke-width="2.6" stroke-linejoin="round" opacity="0.95"/><path d="M2.6 0 H26.4 L29 2.6 V23.4 L26.4 26 H2.6 L0 23.4 V2.6Z" fill="#0000ff"/><path d="M5.2 3.0 H23.8 L25.6 4.8 V21.2 L23.8 23.0 H5.2 L3.4 21.2 V4.8Z" fill="#fff"/><text x="14.5" y="20.2" text-anchor="middle" font-family="Liberation Sans" font-weight="bold" font-size="20" fill="#0000ff" stroke="#0000ff" stroke-width="0.5">6</text></svg>
<svg class="a" style="-webkit-text-stroke:0;left:1211px;top:585px" width="33" height="30" viewBox="-2 -2 33 30"><path d="M2.6 0 H26.4 L29 2.6 V23.4 L26.4 26 H2.6 L0 23.4 V2.6Z" fill="#fff" stroke="#fff" stroke-width="2.6" stroke-linejoin="round" opacity="0.95"/><path d="M2.6 0 H26.4 L29 2.6 V23.4 L26.4 26 H2.6 L0 23.4 V2.6Z" fill="#0000ff"/><path d="M5.2 3.0 H23.8 L25.6 4.8 V21.2 L23.8 23.0 H5.2 L3.4 21.2 V4.8Z" fill="#fff"/><text x="14.5" y="20.2" text-anchor="middle" font-family="Liberation Sans" font-weight="bold" font-size="20" fill="#0000ff" stroke="#0000ff" stroke-width="0.5">7</text></svg>
</body></html>
